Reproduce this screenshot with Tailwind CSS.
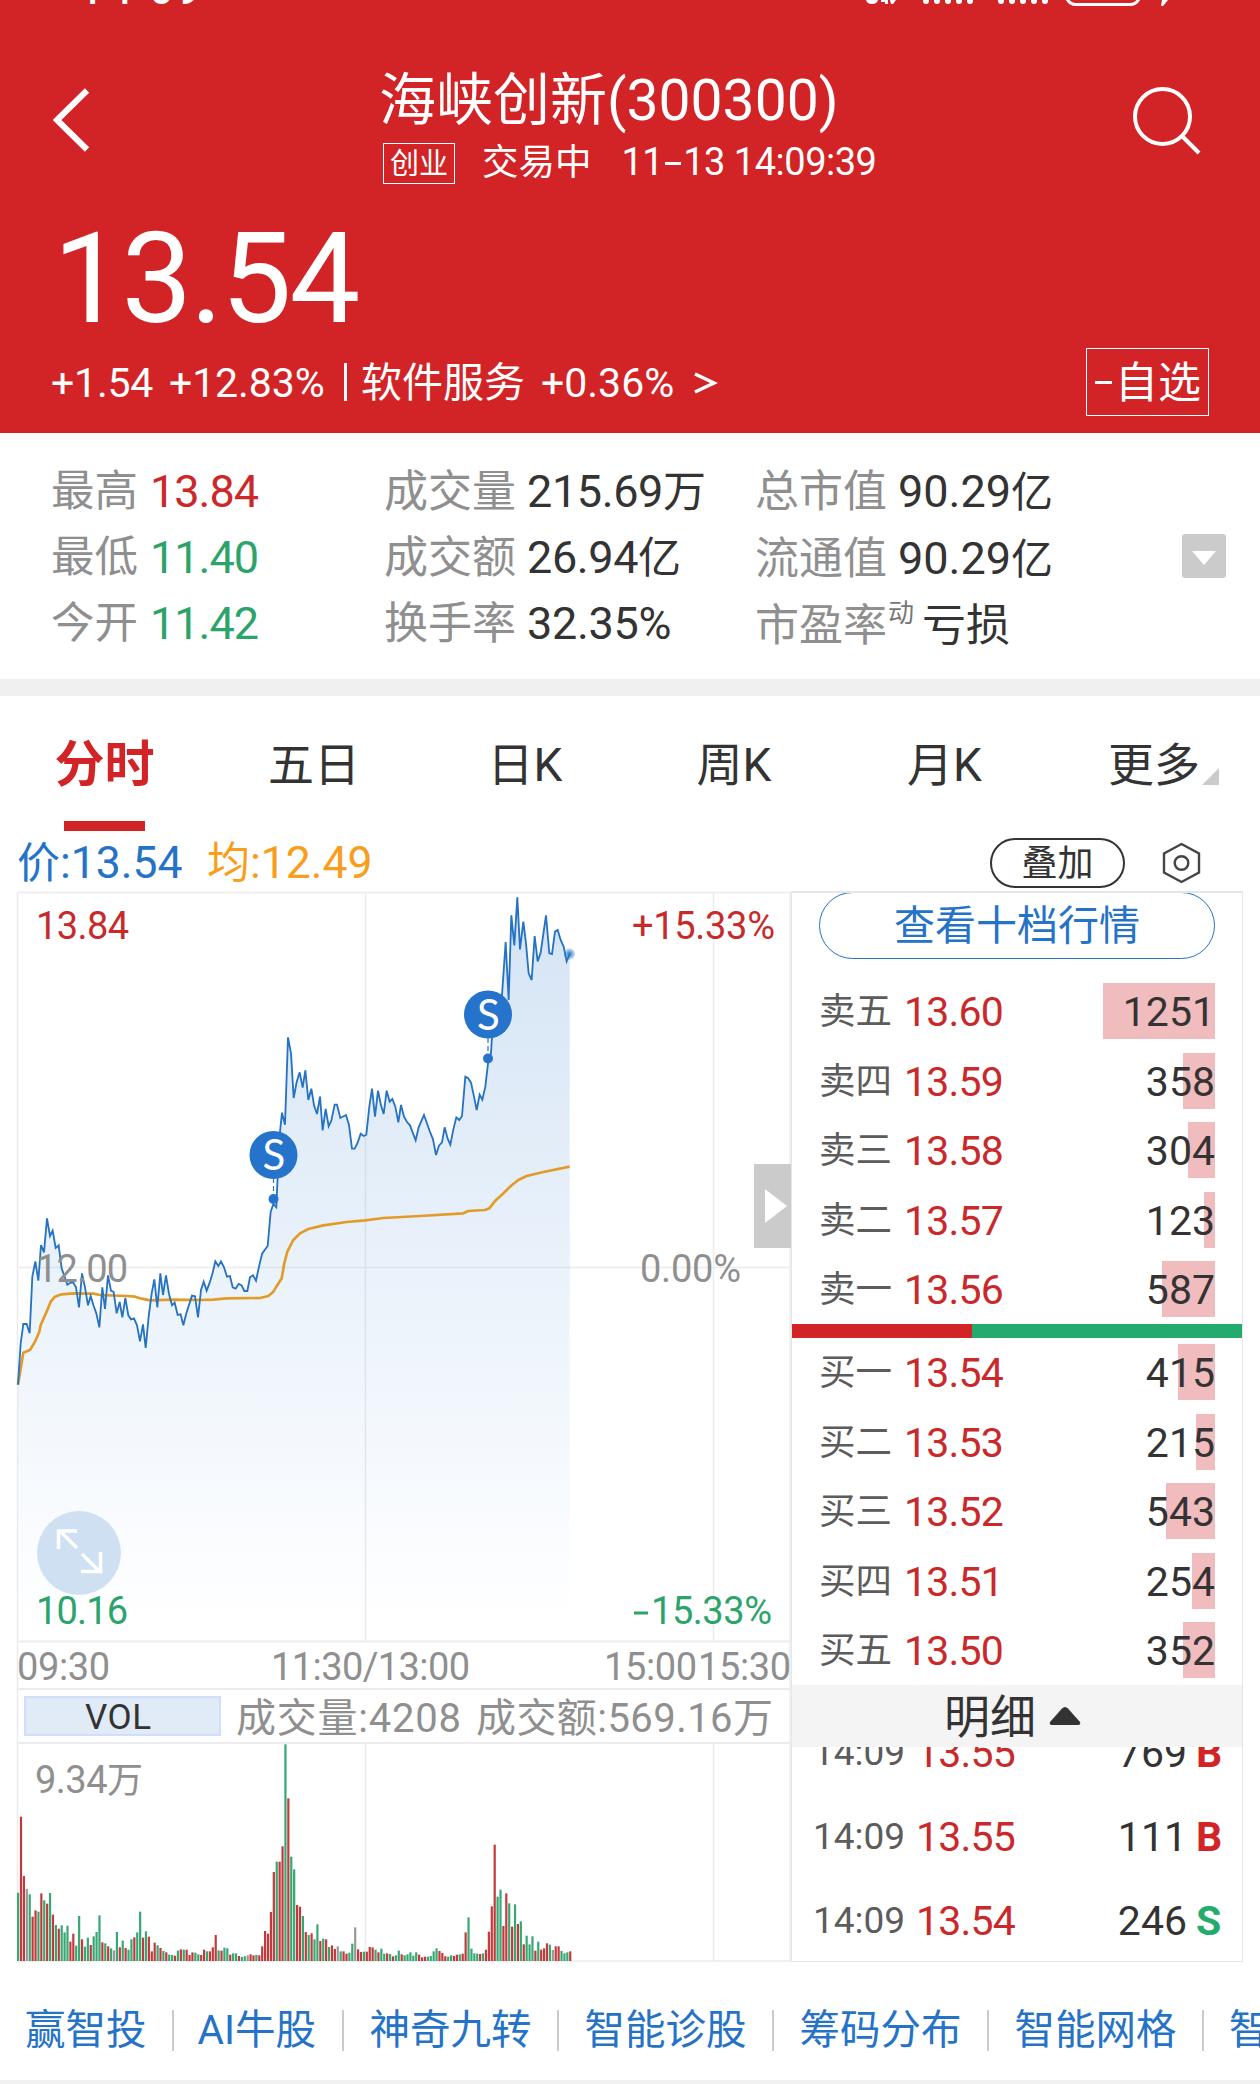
<!DOCTYPE html>
<html lang="zh-CN">
<head>
  <meta charset="UTF-8">
  <title>海峡创新(300300)</title>
  <script src="https://cdn.jsdelivr.net/npm/@tailwindcss/browser@4"></script>
</head>
<body class="w-[1260px] h-[2084px] overflow-hidden bg-white text-[#333] font-['Roboto','Noto_Sans_CJK_SC',sans-serif] whitespace-nowrap">

  <!-- Header -->
  <header class="h-[433px] bg-[#d22426] text-white">
    <!-- Status bar -->
    <svg class="block w-full h-[8px]" viewBox="0 0 1260 8" fill="#fff">
      <text x="80 109 134 150 177" y="4" font-size="40" font-weight="500">14<tspan dy="-6">:</tspan><tspan dy="6">09</tspan></text>
      <path d="M866 0h12q-1 4-6 4t-6-4zM881 0h7v4h-3v-2h-4zM890 0h6l-3 4h-2z"/>
      <path d="M923 0h6v1a3 3 0 0 1-6 0zM934 0h6v1a3 3 0 0 1-6 0zM945 0h6v1a3 3 0 0 1-6 0zM956 0h6v1a3 3 0 0 1-6 0zM967 0h6v1a3 3 0 0 1-6 0z"/>
      <path d="M998 0h6v1a3 3 0 0 1-6 0zM1009 0h6v1a3 3 0 0 1-6 0zM1020 0h6v1a3 3 0 0 1-6 0zM1031 0h6v1a3 3 0 0 1-6 0zM1042 0h6v1a3 3 0 0 1-6 0z"/>
      <path d="M1067 -1q3 5.500 9 5.500h54q6 0 9-5.500" fill="none" stroke="#fff" stroke-width="3"/>
      <path d="M1162 0h6l-5 6h-2z"/>
    </svg>

    <div class="flex h-[184px]">
      <svg class="ml-[49px] mt-[78px] w-[42px] h-[68px] shrink-0" viewBox="0 0 42 68" fill="none" stroke="#fff" stroke-width="6">
        <path d="M38 4.500L8 34L38 63.500"/>
      </svg>
      <div class="ml-[288px] w-[741px] pt-[57px]">
        <h1 class="text-[57px] leading-[72px]">海峡创新(300300)</h1>
        <div class="flex mt-[6px] ml-[4px] items-start">
          <span class="w-[72px] h-[41px] border border-white text-[29px] leading-[40px] text-center">创业</span>
          <span class="ml-[27px] text-[36.500px] leading-[39px]">交易中</span>
          <span class="ml-[30px] text-[38px] leading-[39px] tracking-[-0.500px]">11<span class="inline-block w-[16px] mx-[2px] h-[3px] mb-[10px] bg-white"></span>13 14:09:39</span>
        </div>
      </div>
      <svg class="mt-[76px] ml-[10px] w-[76px] h-[76px] shrink-0" viewBox="1130 84 76 76" fill="none" stroke="#fff" stroke-width="4">
        <circle cx="1162.500" cy="116.500" r="27.500"/>
        <path d="M1182 136l17 17"/>
      </svg>
    </div>

    <p class="ml-[53px] mt-[15px] text-[126px] leading-[145px] tracking-[-2.300px]">13.54</p>

    <div class="flex items-start">
      <p class="flex ml-[51px] mt-[9px] text-[41px] leading-[44px]">
        <span class="w-[118px] tracking-[-0.200px]">+1.54</span>
        <span class="w-[175px] tracking-[-0.100px]">+12.83%</span>
        <span class="mt-[2px] mr-[14px] w-[3px] h-[38px] bg-white"></span>
        <span class="w-[180px]">软件服务</span>
        <span class="w-[153px]">+0.36%</span>
        <svg class="w-[24px] h-[44px]" viewBox="0 0 24 44" fill="none" stroke="#fff" stroke-width="3.500"><path d="M1 13l19 9L1 31"/></svg>
      </p>
      <button class="ml-[368px] mt-[-4px] w-[123px] h-[68px] border border-white flex items-center">
        <span class="ml-[8px] w-[17px] h-[3px] bg-white"></span>
        <span class="ml-[3px] text-[43px] leading-[60px] pt-[2px]">自选</span>
      </button>
    </div>
  </header>

  <!-- Quote figures -->
  <section class="h-[246px] pt-[26px] flex text-[45px] leading-[66px]">
    <div class="ml-[51px] w-[333px]">
      <p class="flex"><span class="w-[99px] text-[43.500px] text-[#8f8f8f]">最高</span><span class="text-[#cc2829] tracking-[-1px]">13.84</span></p>
      <p class="flex"><span class="w-[99px] text-[43.500px] text-[#8f8f8f]">最低</span><span class="text-[#2ba36b] tracking-[-1px]">11.40</span></p>
      <p class="flex"><span class="w-[99px] text-[43.500px] text-[#8f8f8f]">今开</span><span class="text-[#2ba36b] tracking-[-1px]">11.42</span></p>
    </div>
    <div class="w-[371px]">
      <p class="flex"><span class="w-[143px] text-[44px] text-[#8f8f8f]">成交量</span><span class="tracking-[-0.400px]">215.69<span class="text-[43px]">万</span></span></p>
      <p class="flex"><span class="w-[143px] text-[44px] text-[#8f8f8f]">成交额</span><span class="tracking-[-0.400px]">26.94<span class="text-[43px]">亿</span></span></p>
      <p class="flex"><span class="w-[143px] text-[44px] text-[#8f8f8f]">换手率</span><span class="tracking-[-0.300px]">32.35%</span></p>
    </div>
    <div class="w-[427px]">
      <p class="flex"><span class="w-[143px] text-[44px] text-[#8f8f8f]">总市值</span><span>90.29<span class="text-[42px]">亿</span></span></p>
      <p class="flex"><span class="w-[143px] text-[44px] text-[#8f8f8f]">流通值</span><span>90.29<span class="text-[42px]">亿</span></span></p>
      <p class="flex"><span class="text-[44px] text-[#8f8f8f]">市盈率</span><span class="w-[35px] pl-px text-[26px] leading-[40px] text-[#777]">动</span><span class="text-[44px]">亏损</span></p>
    </div>
    <svg class="mt-[75px] w-[44px] h-[44px]" viewBox="0 0 44 44">
      <rect width="44" height="44" rx="3" fill="#cbcbcb"/>
      <path d="M10 17h24L22 31z" fill="#fff"/>
    </svg>
  </section>

  <div class="h-[17px] bg-[#f0f0f0]"></div>

  <!-- Period tabs -->
  <nav class="h-[136px] flex text-[46px] leading-[138px] text-center">
    <div class="w-[209px] flex flex-col items-center">
      <span class="h-[125px] text-[50px] font-bold text-[#d22426]">分时</span>
      <span class="w-[81px] h-[10px] bg-[#d22426]"></span>
    </div>
    <span class="w-[210px]">五日</span>
    <span class="w-[212px]">日K</span>
    <span class="w-[206px]">周K</span>
    <span class="w-[215px]">月K</span>
    <span class="w-[208px] pl-[56px] flex">更多
      <svg class="mt-[72px] ml-[2px] w-[17px] h-[17px]" viewBox="0 0 17 17"><path d="M17 0v17H0z" fill="#cbcbcb"/></svg>
    </span>
  </nav>

  <!-- Price / average -->
  <div class="h-[59px] flex items-start text-[44.500px] leading-[62px]">
    <p class="ml-[17px] w-[190px] text-[#2573c7]"><span class="text-[43px]">价</span>:13.54</p>
    <p class="w-[783px] text-[#f99d1c]"><span class="text-[43px]">均</span>:12.49</p>
    <button class="mt-[6px] w-[135px] h-[50px] border-2 border-[#333] rounded-full text-[36px] leading-[48px]">叠加</button>
    <svg class="ml-[36px] mt-[9px] w-[41px] h-[44px]" viewBox="0 0 41 44" fill="none" stroke="#444" stroke-width="2.400">
      <path d="M20.500 3L38 12.500V31.500L20.500 41L3 31.500V12.500z"/>
      <circle cx="20.500" cy="22" r="6.800"/>
    </svg>
  </div>

  <div class="flex h-[1071px]">
    <!-- Chart -->
    <svg class="shrink-0 w-[791px] h-[1071px]" viewBox="0 891 791 1071" font-size="38">
      <defs>
        <linearGradient id="area" gradientUnits="userSpaceOnUse" x1="0" y1="36" x2="0" y2="2240">
          <stop offset="0" stop-color="#2573c7" stop-opacity=".2"/>
          <stop offset=".6" stop-color="#3a86d8" stop-opacity=".09"/>
          <stop offset="1" stop-color="#4a90e2" stop-opacity="0"/>
        </linearGradient>
        <radialGradient id="glow">
          <stop offset="0" stop-color="#2573c7"/>
          <stop offset="1" stop-color="#2573c7" stop-opacity=".1"/>
        </radialGradient>
      </defs>

      <g fill="none" stroke="#ececec" stroke-width="1.500">
        <path d="M17.500 1961V892.500H790V1961zM365.500 892V1641M713.500 892V1641M17 1267.500H789"/>
        <path d="M365.500 1743V1961M713.500 1743V1961"/>
        <path d="M17 1641.500H791M17 1689H791M17 1743H791" stroke-width="2"/>
      </g>

      <g id="prices" transform="translate(0 880) scale(.33333)" fill="none" stroke-linejoin="round"></g>

      <g fill="#8f8f8f">
        <text x="36" y="939" fill="#c62b2b" textLength="93">13.84</text>
        <text x="36" y="1282" textLength="92">12.00</text>
        <text x="36" y="1624" fill="#2ba36b" textLength="92">10.16</text>
        <text x="632" y="939" fill="#c62b2b" textLength="143">+15.33%</text>
        <text x="640" y="1282" textLength="101">0.00%</text>
        <path d="M634 1611.500h14v3h-14z" fill="#2ba36b"/>
        <text x="651" y="1624" fill="#2ba36b" textLength="121">15.33%</text>
        <text x="17" y="1680" textLength="93">09:30</text>
        <text x="271" y="1680" textLength="199">11:30/13:00</text>
        <text x="604" y="1680" textLength="93">15:00</text>
        <text x="698" y="1680" textLength="93">15:30</text>
      </g>

      <!-- Sell markers -->
      <g fill="#2573cb">
        <path d="M273.500 1178v22M488 1038v22" stroke="#2573cb" stroke-width="1.200" stroke-dasharray="5 3"/>
        <circle cx="273.500" cy="1199" r="5"/>
        <circle cx="488" cy="1058.500" r="5"/>
        <circle cx="273.500" cy="1155" r="24"/>
        <circle cx="488" cy="1014.500" r="24"/>
        <g fill="#fff" font-size="42" text-anchor="middle" font-family="Lato, Roboto">
          <text x="274" y="1170">S</text>
          <text x="488.500" y="1029.500">S</text>
        </g>
      </g>
      <circle cx="569.500" cy="954" r="6" fill="url(#glow)"/>

      <!-- Fullscreen -->
      <circle cx="79" cy="1553" r="42" fill="#cfe0f3"/>
      <path d="M77 1548L59.500 1530.500M58.500 1549V1531H77M82 1554L99.500 1571.500M100.500 1552V1571.500H81" fill="none" stroke="#fff" stroke-width="3.500"/>

      <!-- Handle -->
      <path d="M754 1164h37v84h-37z" fill="#cbcbcb"/>
      <path d="M765 1189v34l22-17z" fill="#fff"/>

      <!-- Volume -->
      <rect x="25" y="1697" width="195" height="38" fill="#e1eaf7" stroke="#d2dffb" stroke-width="2"/>
      <text x="85" y="1728.500" font-size="35" fill="#333" textLength="66">VOL</text>
      <g fill="#8f8f8f">
        <text x="236" y="1731.500" font-size="40" textLength="225">成交量:4208</text>
        <text x="476" y="1731.500" font-size="40" textLength="297">成交额:569.16万</text>
        <text x="35" y="1793" textLength="108">9.34<tspan font-size="36">万</tspan></text>
      </g>
      <g id="volume"></g>
    </svg>

    <!-- Order book -->
    <section class="w-[452px] border border-t-2 border-[#e6e6e6] text-[41px] overflow-hidden">
      <button class="block ml-[27px] mt-[-1px] w-[396px] h-[67px] border border-[#2573c7] rounded-full text-[41px] leading-[67px] text-[#2573c7]">查看十档行情</button>
      <div id="asks" class="mt-[24px] h-[341px]"></div>
      <div class="flex h-[14px]">
        <span class="w-[180px] bg-[#d22426]"></span>
        <span class="flex-1 bg-[#23ab6e]"></span>
      </div>
      <div id="bids" class="mt-[6px] h-[341px]"></div>
      <div class="flex items-center h-[62px] bg-[#f4f4f4]">
        <span class="ml-[152px] pt-[3px] text-[46px] leading-[59px]">明细</span>
        <svg class="ml-[13px] w-[32px] h-[18px]" viewBox="0 0 32 18"><path d="M16 0q1.500 0 3 1.500L31 15q1 3-2 3H3q-3 0-2-3L13 1.500Q14.500 0 16 0z" fill="#333"/></svg>
      </div>
      <div class="h-[213px] overflow-hidden">
        <div id="trades" class="mt-[-36px]"></div>
      </div>
    </section>
  </div>

  <!-- Tool links -->
  <nav class="flex items-center mt-[15px] h-[103px] pt-[3px] text-[40.500px] leading-[60px] text-[#2573c7]">
    <a class="ml-[25px] mr-[25px] shrink-0">赢智投</a>
    <i class="w-[2px] h-[41px] bg-[#cbcbcb] shrink-0"></i>
    <a class="ml-[24px] mr-[26px] shrink-0">AI牛股</a>
    <i class="w-[2px] h-[41px] bg-[#cbcbcb] shrink-0"></i>
    <a class="mx-[25.500px] shrink-0">神奇九转</a>
    <i class="w-[2px] h-[41px] bg-[#cbcbcb] shrink-0"></i>
    <a class="mx-[25.500px] shrink-0">智能诊股</a>
    <i class="w-[2px] h-[41px] bg-[#cbcbcb] shrink-0"></i>
    <a class="mx-[25.500px] shrink-0">筹码分布</a>
    <i class="w-[2px] h-[41px] bg-[#cbcbcb] shrink-0"></i>
    <a class="mx-[25.500px] shrink-0">智能网格</a>
    <i class="w-[2px] h-[41px] bg-[#cbcbcb] shrink-0"></i>
    <a class="ml-[25px] shrink-0">智</a>
  </nav>
  <div class="h-[5px] bg-[#f1f1f1]"></div>

  <script>
    const price = "54,1514 62,1390 70,1332 80,1332 89,1360 97,1190 106,1144 115,1202 123,1095 132,1117 141,1015 150,1068 158,1052 167,1104 176,1096 185,1165 193,1188 202,1214 212,1208 220,1208 228,1222 237,1282 246,1180 255,1222 264,1276 272,1248 281,1278 289,1300 298,1342 307,1222 315,1287 324,1186 333,1232 341,1236 350,1300 359,1266 367,1312 376,1254 385,1306 393,1318 402,1315 411,1336 420,1384 429,1333 437,1404 446,1310 455,1240 463,1198 472,1282 481,1180 489,1245 498,1186 507,1242 516,1276 524,1268 533,1305 542,1303 550,1336 559,1300 568,1272 576,1247 585,1249 594,1312 603,1230 611,1205 620,1232 629,1208 638,1178 646,1144 655,1158 663,1144 672,1162 681,1190 690,1188 698,1222 707,1226 716,1212 725,1216 733,1233 742,1233 750,1192 759,1186 768,1202 777,1160 786,1122 794,1110 803,1098 812,996 820,972 829,982 838,775 846,698 855,734 864,472 873,520 881,654 890,606 899,577 908,623 916,571 925,660 934,626 942,676 951,702 960,650 968,751 977,687 986,739 994,722 1004,674 1011,674 1021,714 1038,705 1047,735 1056,806 1064,806 1073,788 1082,761 1091,768 1099,764 1108,680 1116,626 1125,710 1134,632 1143,676 1151,702 1160,632 1169,665 1177,657 1186,680 1195,727 1203,675 1212,710 1221,726 1230,736 1247,781 1256,742 1272,705 1289,753 1299,778 1308,825 1317,797 1326,787 1334,742 1343,776 1351,794 1360,748 1369,712 1378,720 1386,708 1396,590 1404,594 1413,608 1422,650 1430,690 1439,644 1447,659 1456,620 1464,550 1473,520 1476,470 1497,400 1506,345 1517,186 1526,360 1534,106 1543,196 1552,52 1560,208 1570,125 1578,190 1586,280 1595,300 1604,168 1613,244 1622,218 1638,106 1648,220 1656,222 1665,155 1673,150 1682,180 1691,200 1700,244 1709,222";
    const average = "54,1514 70,1418 90,1410 105,1385 118,1355 122,1335 140,1295 152,1265 165,1250 185,1243 220,1240 280,1241 300,1245 380,1248 405,1250 425,1256 450,1261 520,1259 600,1260 640,1259 680,1255 780,1254 805,1248 820,1235 845,1195 853,1150 862,1115 880,1080 900,1060 925,1047 970,1036 1040,1026 1095,1021 1150,1014 1260,1008 1390,1000 1405,993 1455,990 1468,985 1485,963 1508,942 1520,930 1535,916 1555,900 1580,888 1630,876 1709,860";
    document.getElementById("prices").innerHTML = `
      <polygon points="54,2260 ${price} 1709,2260" fill="url(#area)" />
      <polyline points="${average}" stroke="#e39b27" stroke-width="8" />
      <polyline points="${price}" stroke="#2573c2" stroke-width="5.500" stroke-linejoin="miter" />`;

    // r = up, g = down, n = unchanged
    const volume = "g205 r433 r255 n216 g200 r133 r152 g148 r203 g182 r172 g204 r139 g108 r97 g107 g86 g106 r58 r82 g46 g135 r65 g43 g70 r48 g74 g87 g137 r56 g53 r44 g38 n32 g87 r41 g61 r39 g34 g65 r71 g86 g148 r70 g89 r73 r29 r55 g47 r39 g30 r26 g19 g18 r16 g31 r35 g34 r34 r18 r26 g25 g20 r18 r34 g29 r29 r41 r78 g32 r31 g40 g38 r19 g23 g23 r15 g12 g14 n17 r20 r17 g18 r17 r44 r90 r82 r147 r267 g298 r298 r344 g650 r488 g313 g275 r168 r163 g135 r87 g78 r83 g65 g110 r60 g67 r65 g42 r47 r36 n44 g29 r29 r22 g25 g52 n101 r35 r27 g28 r28 r42 r41 g34 r26 g37 g22 r23 g21 r14 g17 g31 r20 g17 g20 g26 g16 g26 r19 r11 r13 g13 g15 g29 g38 r30 r24 r14 g13 g17 r15 r19 g20 r22 r86 g131 g37 g23 g22 r21 g23 r34 r88 r164 r349 g193 g214 r105 r203 g173 r103 g170 r111 g119 r50 g76 g50 g74 r31 g58 r34 r38 r53 g49 n33 r44 r44 g30 g23 g26 r29";
    const colors = { r: "#c23a3b", g: "#36a873", n: "#999" };
    document.getElementById("volume").innerHTML = volume.split(" ").map((v, i) => {
      const h = v.slice(1) / 3;
      return `<rect x="${17 + i * 2.906}" y="${1961 - h}" width="2.2" height="${h}" fill="${colors[v[0]]}" />`;
    }).join("");

    const row = ([label, value, count]) => `
      <div class="flex h-[56px] mb-[13.500px] leading-[58px]">
        <span class="ml-[27px] w-[85px] text-[36.500px] text-[#5c5c5c]">${label}</span>
        <span class="w-[183px] text-[#c9292a] tracking-[-0.800px]">${value}</span>
        <span class="relative flex w-[128px] justify-end">
          <span class="bg-[#f0bcbe] h-[56px]" style="width:${Math.round(count * 0.0895)}px"></span>
          <span class="absolute right-0">${count}</span>
        </span>
      </div>`;
    document.getElementById("asks").innerHTML = [
      ["卖五", "13.60", 1251], ["卖四", "13.59", 358], ["卖三", "13.58", 304], ["卖二", "13.57", 123], ["卖一", "13.56", 587]
    ].map(row).join("");
    document.getElementById("bids").innerHTML = [
      ["买一", "13.54", 415], ["买二", "13.53", 215], ["买三", "13.52", 543], ["买四", "13.51", 254], ["买五", "13.50", 352]
    ].map(row).join("");

    document.getElementById("trades").innerHTML = [
      ["14:09", "13.55", 769, "B"], ["14:09", "13.55", 111, "B"], ["14:09", "13.54", 246, "S"]
    ].map(([time, value, count, side]) => `
      <div class="flex h-[84px] leading-[84px]">
        <span class="ml-[21px] w-[103px] text-[37px] text-[#5c5c5c]">${time}</span>
        <span class="w-[140px] text-[#c9292a] tracking-[-0.800px]">${value}</span>
        <span class="w-[131px] text-right">${count}</span>
        <span class="ml-[9px] font-bold ${side === "B" ? "text-[#d22426]" : "text-[#23ab6e]"}">${side}</span>
      </div>`).join("");
  </script>
</body>
</html>
